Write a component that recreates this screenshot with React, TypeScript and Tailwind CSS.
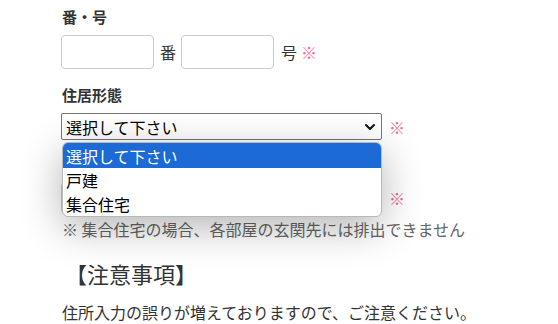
const font = { fontFamily: "'Noto Sans CJK JP', 'Noto Sans', sans-serif" };

const Req = () => <span className="text-[16px] leading-[20px] text-[#f06a98]">※</span>;

const App = () => {
  return (
    <div className="w-[558px] h-[324px] overflow-hidden bg-white text-[#333]" style={font}>
      <div className="pl-[61px] pt-[7px]">
        {/* 番・号 */}
        <div className="text-[15px] font-bold leading-[20px] pl-[1px]">番・号</div>
        <div className="mt-[8px] flex items-center">
          <div className="w-[93px] h-[34px] border border-[#ccc] rounded-[4px] bg-white" />
          <span className="ml-[6px] text-[16px] leading-[20px]">番</span>
          <div className="ml-[5px] w-[93px] h-[34px] border border-[#ccc] rounded-[4px] bg-white" />
          <span className="ml-[7px] text-[16px] leading-[20px]">号</span>
          <span className="ml-[4px]">
            <Req />
          </span>
        </div>

        {/* 住居形態 */}
        <div className="mt-[16px] text-[15px] font-bold leading-[20px] pl-[1px]">住居形態</div>
        <div className="mt-[8px] flex items-center">
          <div className="relative">
            <div className="w-[321px] h-[27px] border border-[#767676] rounded-[2px] bg-white flex items-center justify-between pl-[4px] pr-[5px]">
              <span className="text-[16px] leading-[20px] text-black">選択して下さい</span>
              <svg width="12" height="8" viewBox="0 0 12 8" fill="none">
                <path d="M2 2L6 6L10 2" stroke="#111" strokeWidth="2" strokeLinecap="round" strokeLinejoin="round" />
              </svg>
            </div>
            {/* open options list */}
            <div className="absolute z-10 top-[29px] left-[1px] w-[320px] rounded-[6px] border border-[#b8b8b8] bg-white overflow-hidden shadow-[0_10px_40px_rgba(0,0,0,0.3)]">
              <div className="h-[25px] px-[3px] flex items-center bg-[#1b6ad6] text-white text-[16px]">選択して下さい</div>
              <div className="h-[24px] px-[3px] flex items-center text-black text-[16px]">戸建</div>
              <div className="h-[24px] px-[3px] flex items-center text-black text-[16px]">集合住宅</div>
            </div>
          </div>
          <span className="ml-[7px]">
            <Req />
          </span>
        </div>

        {/* row hidden behind the open list */}
        <div className="mt-[10px] h-[20px]" />
        <div className="mt-[12px] flex items-center">
          <div className="w-[321px] h-[32px] border border-[#ccc] rounded-[4px] bg-white" />
          <span className="ml-[7px]">
            <Req />
          </span>
        </div>

        <div className="mt-[5px] text-[16px] leading-[20px] text-[#666] pl-[1px]">※ 集合住宅の場合、各部屋の玄関先には排出できません</div>

        <div className="mt-[19px] text-[22px] leading-[30px] pl-[4px] text-[#333]">【注意事項】</div>
        <div className="mt-[14px] text-[16px] leading-[20px] pl-[1px] text-[#333]">住所入力の誤りが増えておりますので、ご注意ください。</div>
      </div>
    </div>
  );
};

export default App;
